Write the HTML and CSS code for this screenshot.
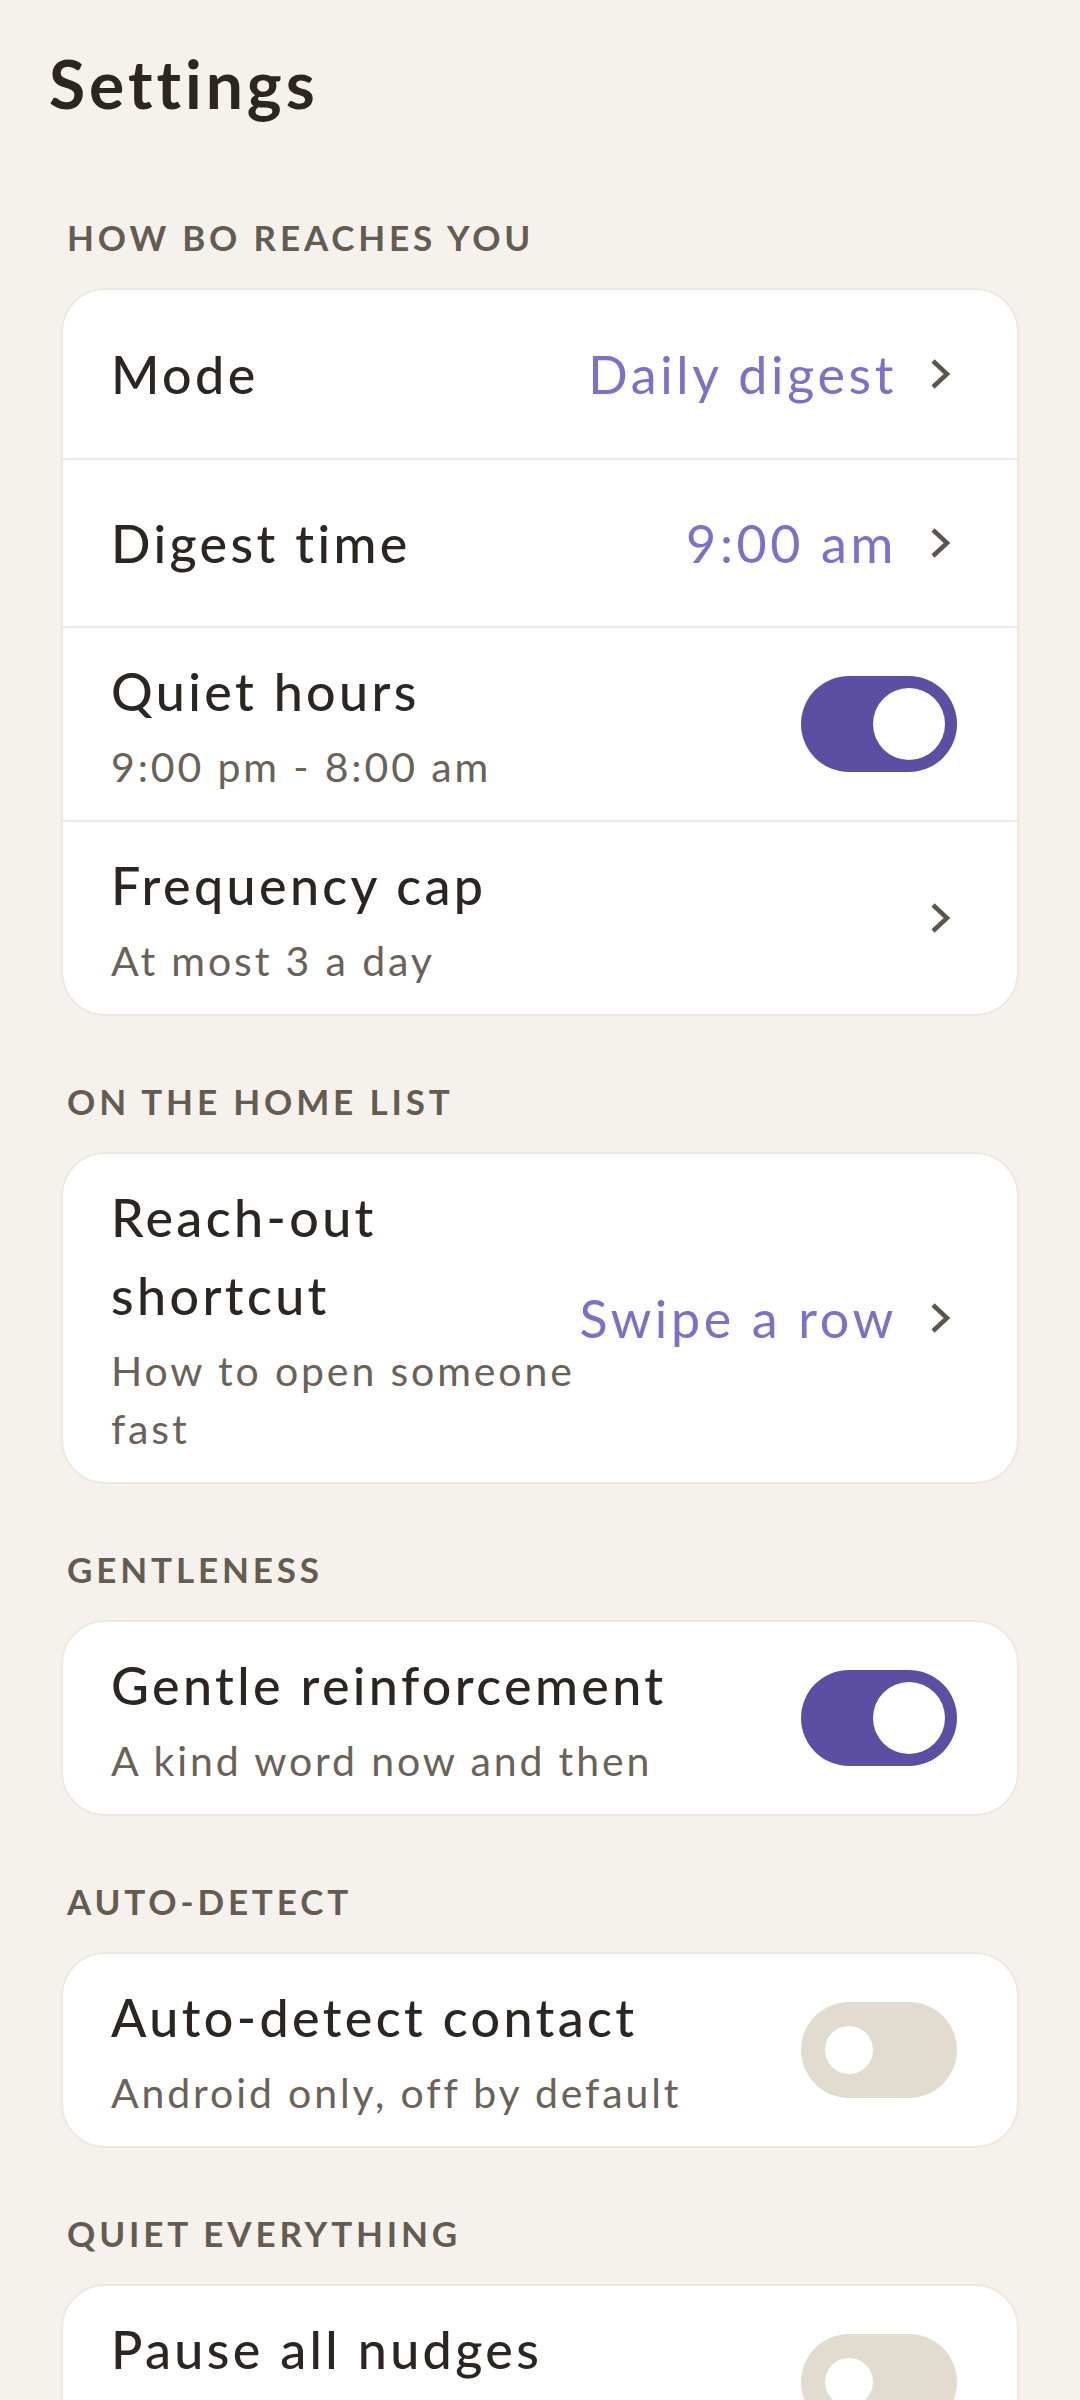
FILE: index.html
```html
<!DOCTYPE html>
<html lang="en">
<head>
<meta charset="utf-8">
<title>Settings</title>
<link rel="stylesheet" href="styles.css">
</head>
<body>
<main class="screen">
  <h1 class="page-title">Settings</h1>

  <section class="group">
    <h2 class="group-label">HOW BO REACHES YOU</h2>
    <div class="card">
      <div class="row">
        <div class="row-text"><div class="row-title">Mode</div></div>
        <div class="row-value">Daily digest</div>
        <svg class="chev" viewBox="0 0 36 36"><path d="M12 5 L26 18 L12 31"/></svg>
      </div>
      <div class="row">
        <div class="row-text"><div class="row-title">Digest time</div></div>
        <div class="row-value">9:00 am</div>
        <svg class="chev" viewBox="0 0 36 36"><path d="M12 5 L26 18 L12 31"/></svg>
      </div>
      <div class="row">
        <div class="row-text">
          <div class="row-title">Quiet hours</div>
          <div class="row-sub">9:00 pm - 8:00 am</div>
        </div>
        <div class="switch on"><span class="knob"></span></div>
      </div>
      <div class="row">
        <div class="row-text">
          <div class="row-title">Frequency cap</div>
          <div class="row-sub">At most 3 a day</div>
        </div>
        <svg class="chev" viewBox="0 0 36 36"><path d="M12 5 L26 18 L12 31"/></svg>
      </div>
    </div>
  </section>

  <section class="group">
    <h2 class="group-label">ON THE HOME LIST</h2>
    <div class="card">
      <div class="row">
        <div class="row-text">
          <div class="row-title">Reach-out shortcut</div>
          <div class="row-sub">How to open someone fast</div>
        </div>
        <div class="row-value">Swipe a row</div>
        <svg class="chev" viewBox="0 0 36 36"><path d="M12 5 L26 18 L12 31"/></svg>
      </div>
    </div>
  </section>

  <section class="group">
    <h2 class="group-label">GENTLENESS</h2>
    <div class="card">
      <div class="row">
        <div class="row-text">
          <div class="row-title">Gentle reinforcement</div>
          <div class="row-sub">A kind word now and then</div>
        </div>
        <div class="switch on"><span class="knob"></span></div>
      </div>
    </div>
  </section>

  <section class="group">
    <h2 class="group-label">AUTO-DETECT</h2>
    <div class="card">
      <div class="row">
        <div class="row-text">
          <div class="row-title">Auto-detect contact</div>
          <div class="row-sub">Android only, off by default</div>
        </div>
        <div class="switch off"><span class="knob"></span></div>
      </div>
    </div>
  </section>

  <section class="group">
    <h2 class="group-label">QUIET EVERYTHING</h2>
    <div class="card">
      <div class="row row-tall">
        <div class="row-text">
          <div class="row-title">Pause all nudges</div>
        </div>
        <div class="switch off"><span class="knob"></span></div>
      </div>
    </div>
  </section>
</main>
</body>
</html>
```

FILE: styles.css
```css
* {
  box-sizing: border-box;
  margin: 0;
  padding: 0;
}

html, body {
  background: #F5F2ED;
}

body {
  font-family: Lato, "Noto Sans", "DejaVu Sans", sans-serif;
  color: #2B2622;
}

.screen {
  padding: 45px 61px 120px;
}

.page-title {
  font-size: 66px;
  line-height: 77px;
  font-weight: 700;
  letter-spacing: 0.06em;
  margin-left: -12px;
  margin-bottom: 94px;
}

.group-label {
  font-size: 35px;
  line-height: 42px;
  font-weight: 700;
  letter-spacing: 0.11em;
  color: #655C51;
  padding-left: 6px;
  margin-bottom: 30px;
}

.group + .group .group-label {
  margin-top: 64px;
}

.card {
  background: #FFFFFF;
  border: 2px solid #EEE8DE;
  border-radius: 44px;
  overflow: hidden;
}

.row {
  display: flex;
  align-items: center;
  gap: 4px;
  min-height: 168px;
  padding: 24px 60px 24px 48px;
}

.row + .row {
  border-top: 2px solid #EFEAE3;
}

.row-tall {
  min-height: 192px;
}

.row-tall .row-text {
  align-self: flex-start;
}

.row-text {
  flex: 1;
  min-width: 0;
  display: flex;
  flex-direction: column;
  gap: 8px;
}

.row-title {
  font-size: 52px;
  line-height: 78px;
  font-weight: 500;
  letter-spacing: 0.065em;
}

.row-sub {
  font-size: 41px;
  line-height: 58px;
  color: #6A6258;
  letter-spacing: 0.07em;
}

.row-value {
  flex-shrink: 0;
  font-size: 52px;
  line-height: 78px;
  color: #7E6FC8;
  letter-spacing: 0.07em;
}

.chev {
  flex-shrink: 0;
  width: 36px;
  height: 36px;
  margin-left: 20px;
  fill: none;
  stroke: #5D554B;
  stroke-width: 4.5;
  stroke-linejoin: miter;
}

.switch {
  flex-shrink: 0;
  width: 156px;
  height: 96px;
  border-radius: 48px;
  display: flex;
  align-items: center;
}

.switch .knob {
  display: block;
  background: #FFFFFF;
  border-radius: 50%;
}

.switch.on {
  background: #5B4EA3;
  justify-content: flex-end;
  padding: 12px;
}

.switch.on .knob {
  width: 72px;
  height: 72px;
}

.switch.off {
  background: #E1DCCF;
  justify-content: flex-start;
  padding: 24px;
}

.switch.off .knob {
  width: 48px;
  height: 48px;
}
```
